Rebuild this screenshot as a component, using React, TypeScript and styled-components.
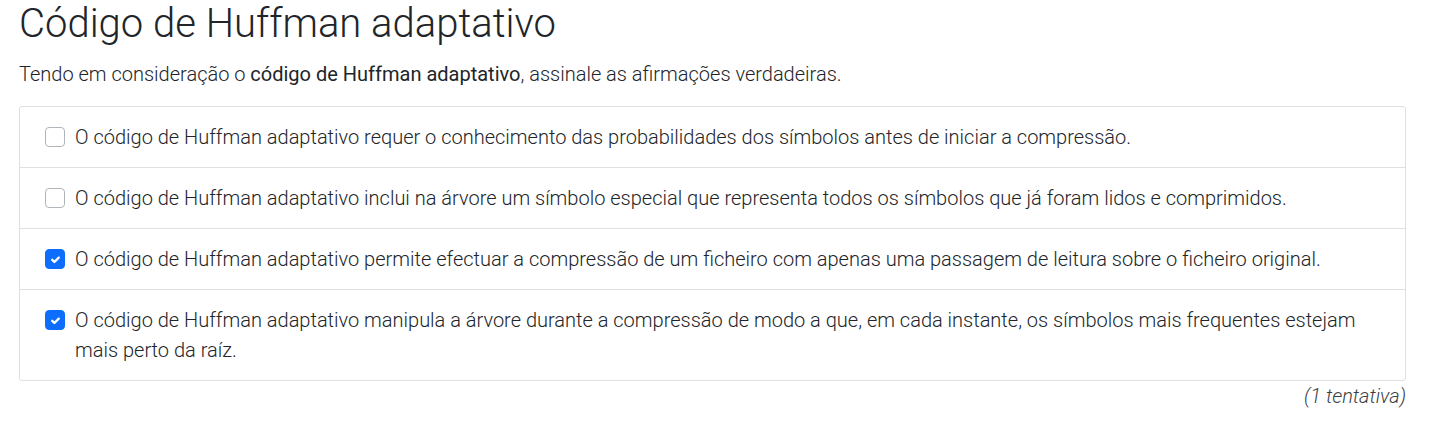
import React from "react";
import styled, { createGlobalStyle } from "styled-components";

const Global = createGlobalStyle`
  html, body { margin: 0; padding: 0; background: #fff; }
  body { font-family: Roboto, "Liberation Sans", sans-serif; font-weight: 300; color: #212529; }
`;

const Page = styled.div`
  width: 1387px;
  margin-left: 19px;
`;

const Title = styled.h1`
  margin: 0;
  font-size: 40px;
  font-weight: 300;
  line-height: 48px;
  color: #212529;
`;

const Lead = styled.p`
  margin: 11px 0 17px;
  font-size: 20px;
  line-height: 30px;
`;

const Strong = styled.strong`
  font-weight: 400;
`;

const List = styled.ul`
  list-style: none;
  margin: 0;
  padding: 0;
  border: 1px solid #dfdfdf;
  border-radius: 3px;
`;

const Row = styled.li`
  display: flex;
  align-items: flex-start;
  gap: 10px;
  padding: 15px 25px;
  font-size: 20px;
  line-height: 30px;
  & + & { border-top: 1px solid #dfdfdf; }
`;

const Box = styled.span<{ $checked: boolean }>`
  flex: none;
  box-sizing: border-box;
  width: 20px;
  height: 20px;
  margin-top: 5px;
  border-radius: 4px;
  border: 1px solid ${(p) => (p.$checked ? "#0d6efd" : "#b0b5ba")};
  background: ${(p) => (p.$checked ? "#0d6efd" : "#fff")};
  display: flex;
  align-items: center;
  justify-content: center;
`;

const Footer = styled.div`
  text-align: right;
  font-style: italic;
  font-size: 20px;
  line-height: 30px;
  color: #3a3f44;
  margin-top: 0;
`;

const items = [
  { t: "O código de Huffman adaptativo requer o conhecimento das probabilidades dos símbolos antes de iniciar a compressão.", c: false },
  { t: "O código de Huffman adaptativo inclui na árvore um símbolo especial que representa todos os símbolos que já foram lidos e comprimidos.", c: false },
  { t: "O código de Huffman adaptativo permite efectuar a compressão de um ficheiro com apenas uma passagem de leitura sobre o ficheiro original.", c: true },
  { t: "O código de Huffman adaptativo manipula a árvore durante a compressão de modo a que, em cada instante, os símbolos mais frequentes estejam mais perto da raíz.", c: true },
];

export default function App() {
  return (
    <Page>
      <Global />
      <Title>Código de Huffman adaptativo</Title>
      <Lead>
        Tendo em consideração o <Strong>código de Huffman adaptativo</Strong>, assinale as afirmações verdadeiras.
      </Lead>
      <List>
        {items.map((it, i) => (
          <Row key={i}>
            <Box $checked={it.c}>
              {it.c && (
                <svg width="13" height="13" viewBox="0 0 20 20">
                  <path d="M5 10.5l3.3 3.3L15 7.2" fill="none" stroke="#fff" strokeWidth="3.6" strokeLinecap="round" strokeLinejoin="round" />
                </svg>
              )}
            </Box>
            <span>{it.t}</span>
          </Row>
        ))}
      </List>
      <Footer>(1 tentativa)</Footer>
    </Page>
  );
}
